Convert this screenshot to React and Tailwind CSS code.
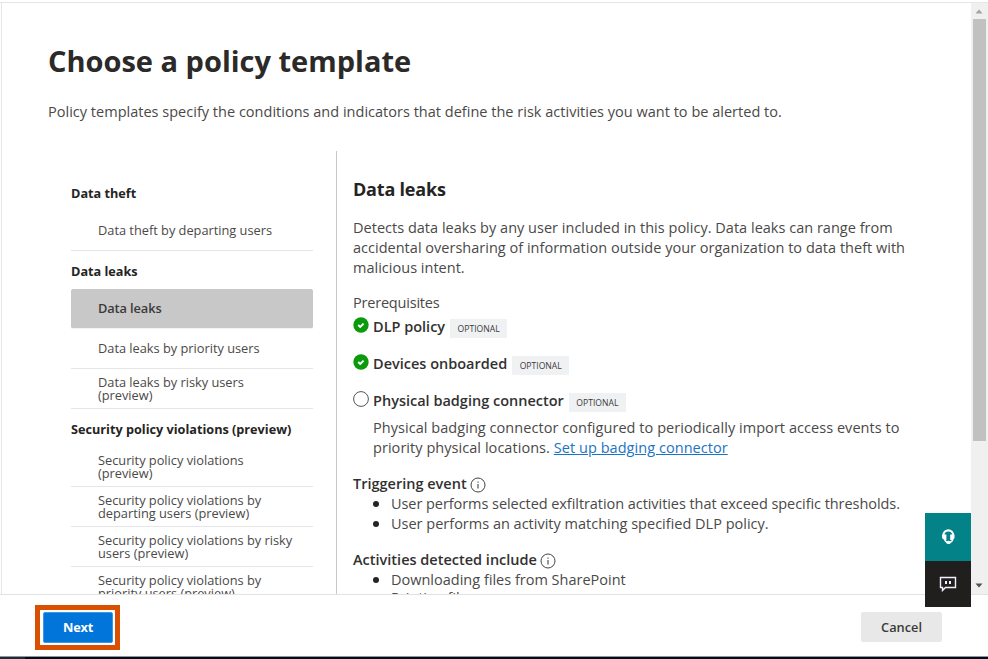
const groups = [
  { title: "Data theft", items: [["Data theft by departing users"]] },
  {
    title: "Data leaks",
    items: [["Data leaks"], ["Data leaks by priority users"], ["Data leaks by risky users", "(preview)"]],
  },
  {
    title: "Security policy violations (preview)",
    items: [
      ["Security policy violations", "(preview)"],
      ["Security policy violations by", "departing users (preview)"],
      ["Security policy violations by risky", "users (preview)"],
      ["Security policy violations by", "priority users (preview)"],
    ],
  },
];

function Sidebar() {
  return (
    <nav className="ml-[69px] mt-[22px] w-[242px] shrink-0 text-[12.8px] tracking-[-0.01px]">
      {groups.map((g, gi) => (
        <section key={g.title}>
          <h3 className="flex h-[38px] items-center pt-1 text-[12.7px] font-bold text-[#252423]">{g.title}</h3>
          <ul>
            {g.items.map((lines, i) => {
              const selected = gi === 1 && i === 0;
              return (
                <li
                  key={i}
                  className={
                    "flex h-10 flex-col justify-center pl-[27px] pt-px leading-[13.5px] " +
                    (selected
                      ? "rounded-[2px] border-b border-[#f3f2f1] bg-[#c8c8c8] font-semibold tracking-[-0.1px] text-[#3b3a39]"
                      : "border-b border-[#e6e6e6] text-[#4a4948]")
                  }
                >
                  {lines.map((l) => (
                    <span key={l}>{l}</span>
                  ))}
                </li>
              );
            })}
          </ul>
        </section>
      ))}
    </nav>
  );
}

function Check() {
  return (
    <svg className="h-4 w-4" viewBox="0 0 16 16">
      <circle cx="8" cy="8" r="7.7" fill="#0b9a0b" />
      <path d="M5.200 8l2 2 3.400-3.400" fill="none" stroke="#fff" strokeWidth="1.9" />
    </svg>
  );
}

function Empty() {
  return (
    <svg className="h-4 w-4" viewBox="0 0 16 16">
      <circle cx="8" cy="8" r="7.4" fill="#fff" stroke="#555" strokeWidth="1" />
    </svg>
  );
}

function Info() {
  return (
    <svg className="mt-[2.500px] h-4 w-4" viewBox="0 0 16 16">
      <circle cx="8" cy="8" r="7" fill="none" stroke="#444" strokeWidth="1" />
      <path d="M8 7v4.600M8 4.400v1.300" stroke="#444" strokeWidth="1.1" />
    </svg>
  );
}

function Prereq({ done, label }) {
  return (
    <div className="flex h-5 items-start">
      <div className="mt-[-0.500px] w-5">{done ? <Check /> : <Empty />}</div>
      <span className="font-semibold text-[#323130]">{label}</span>
      <span className="ml-[5px] mt-[2px] flex h-[19px] w-[57px] items-center justify-center bg-[#f0f1f3] text-[8.6px] font-medium text-[#3b3a39]">
        OPTIONAL
      </span>
    </div>
  );
}

function Bullets({ children }) {
  return <ul>{children}</ul>;
}

function Bullet({ children, className = "" }) {
  return (
    <li className={"flex items-center " + className}>
      <span className="ml-5 mr-[12px] h-1.5 w-1.5 rounded-full bg-[#252423]" />
      {children}
    </li>
  );
}

function Detail() {
  return (
    <main className="ml-[23px] w-[620px] border-l border-[#c8c8c8] pl-4 pt-[26px] text-[14.5px] leading-5 text-[#4a4948]">
      <h2 className="text-[18px] font-bold leading-6 tracking-[-0.200px] text-[#252423]">Data leaks</h2>
      <p className="mt-[17px] tracking-[0.015px]">
        Detects data leaks by any user included in this policy. Data leaks can range from
        <br />
        accidental oversharing of information outside your organization to data theft with
        <br />
        malicious intent.
      </p>
      <p className="mt-[15px] tracking-[-0.2px]">Prerequisites</p>
      <div className="mt-1 flex flex-col gap-[17px]">
        <Prereq done label="DLP policy" />
        <Prereq done label="Devices onboarded" />
        <Prereq label="Physical badging connector" />
      </div>
      <p className="ml-5 mt-[7px] tracking-[0.050px]">
        Physical badging connector configured to periodically import access events to
        <br />
        priority physical locations. <a className="text-[#1a74c4] underline">Set up badging connector</a>
      </p>
      <h3 className="mt-4 flex gap-[3px] font-semibold text-[#323130]">
        Triggering event <Info />
      </h3>
      <Bullets>
        <Bullet className="tracking-[-0.060px]">
          User performs selected exfiltration activities that exceed specific thresholds.
        </Bullet>
        <Bullet>User performs an activity matching specified DLP policy.</Bullet>
      </Bullets>
      <h3 className="mt-4 flex gap-[3px] font-semibold text-[#323130]">
        Activities detected include <Info />
      </h3>
      <Bullets>
        <Bullet>Downloading files from SharePoint</Bullet>
        <Bullet className="leading-[16px]">Printing files</Bullet>
      </Bullets>
    </main>
  );
}

function Scrollbar() {
  return (
    <div className="flex w-[17px] shrink-0 flex-col items-center bg-[#f0f0f0]">
      <svg className="h-4 w-[17px]" viewBox="0 0 17 16">
        <path d="M4.500 10.500L8 6.500l3.500 4z" fill="#a3a3a3" />
      </svg>
      <div className="h-[422px] w-[13px] bg-[#c1c1c1]" />
      <div className="grow" />
      <svg className="h-4 w-[17px]" viewBox="0 0 17 16">
        <path d="M4.500 5.500h7L8 9.500z" fill="#505050" />
      </svg>
    </div>
  );
}

export default function App() {
  return (
    <div className="relative flex h-[659px] w-[988px] flex-col overflow-hidden bg-white pt-[2px] font-['Open_Sans','Noto_Sans',sans-serif] whitespace-nowrap">
      <div className="flex h-[592px] border-t border-[#e6e6e6]">
        <div className="ml-px flex grow flex-col overflow-hidden border-l border-[#e6e6e6]">
          <h1 className="ml-[46px] mt-[38px] text-[29px] font-bold leading-10 text-[#2b2a29]">Choose a policy template</h1>
          <p className="ml-[46px] mt-[21px] text-[14.5px] leading-5 tracking-[0.015px] text-[#4a4948]">
            Policy templates specify the conditions and indicators that define the risk activities you want to be alerted to.
          </p>
          <div className="mt-[29px] flex">
            <Sidebar />
            <Detail />
          </div>
        </div>
        <Scrollbar />
      </div>
      <footer className="flex h-[62px] items-start justify-between border-t border-[#e3e3e3] pl-[35px] pr-[46px] pt-[10px]">
        <div className="flex h-[45px] w-[85px] items-center justify-center border-[5px] border-[#d85000] bg-white pl-px">
          <button className="h-[31px] w-[70px] rounded-[2px] border border-[#3b98e6] bg-[#0175d9] text-[12.8px] font-bold tracking-[-0.200px] text-white">
            Next
          </button>
        </div>
        <button className="mt-[7px] h-[30px] w-[81px] rounded-[2px] bg-[#e8e8e8] pt-px text-[12.8px] font-semibold text-[#3b3a39]">
          Cancel
        </button>
      </footer>
      <div className="flex h-[3px] border-t border-[#8f969c] bg-[#020b1a]">
        <div className="w-[25px] bg-[#1d2b36]" />
      </div>
      <div className="absolute left-[925px] top-[513px] w-[46px]">
        <div className="flex h-12 items-center justify-center bg-[#038387]">
          <svg className="h-4 w-4" viewBox="0 0 16 16" fill="none" stroke="#fff">
            <path d="M3.400 9V6a4.900 4.700 0 0 1 9.800 0V9" strokeWidth="2.200" />
            <path d="M2.300 5.500H6.400V11H4.500L2.300 9.500zM14.300 5.500H10.200V11h2L14.300 9.500z" fill="#fff" stroke="none" />
            <path d="M4.500 10.500c.5 1.500 1.500 2.500 3.500 2.900M12.800 9.500c0 2.400-1.400 3.600-3.800 3.900" strokeWidth="1.500" />
            <ellipse cx="8.600" cy="13.400" rx="2.300" ry="1.700" fill="#fff" stroke="none" />
          </svg>
        </div>
        <div className="flex h-[46px] items-center justify-center bg-[#201f1e]">
          <svg className="h-4 w-[18px]" viewBox="0 0 18 16" fill="none" stroke="#f3efff">
            <path d="M1.500 1.500h15v10H6.500l-3 3v-3h-2z" strokeWidth="1.400" />
            <path d="M7 5v3M11 5v3" strokeWidth="2" />
          </svg>
        </div>
      </div>
    </div>
  );
}
